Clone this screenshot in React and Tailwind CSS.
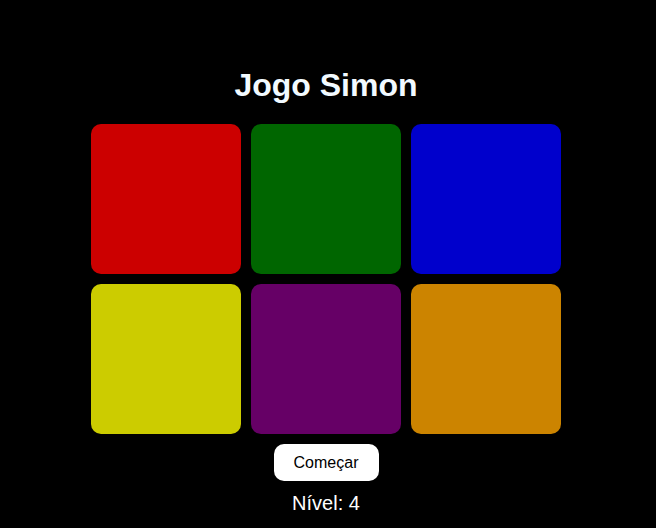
import React, { useState } from 'react';

const colors = [
    'bg-[#cc0000]',
    'bg-[#006600]',
    'bg-[#0000cc]',
    'bg-[#cccc00]',
    'bg-[#660066]',
    'bg-[#cc8400]',
];

const App = () => {
    const [level] = useState(4);

    return (
        <div className="min-h-[528px] w-full bg-black font-['Liberation_Sans',Arial,sans-serif] text-white">
            <div className="flex flex-col items-center pt-[67px] pr-[4px]">
                <h1 className="text-[32px] font-bold leading-[37px] text-[#f2faff]">Jogo Simon</h1>
                <div className="mt-[20px] grid grid-cols-[150px_150px_150px] gap-[10px]">
                    {colors.map((c) => (
                        <div key={c} className={`h-[150px] w-[150px] rounded-[10px] ${c}`}></div>
                    ))}
                </div>
                <button className="mt-[10px] flex h-[37px] w-[105px] items-center justify-center rounded-[10px] bg-white text-[16px] text-black">
                    Começar
                </button>
                <p className="mt-[11px] text-[20px] leading-[23px]">Nível: {level}</p>
            </div>
        </div>
    );
};

export default App;
